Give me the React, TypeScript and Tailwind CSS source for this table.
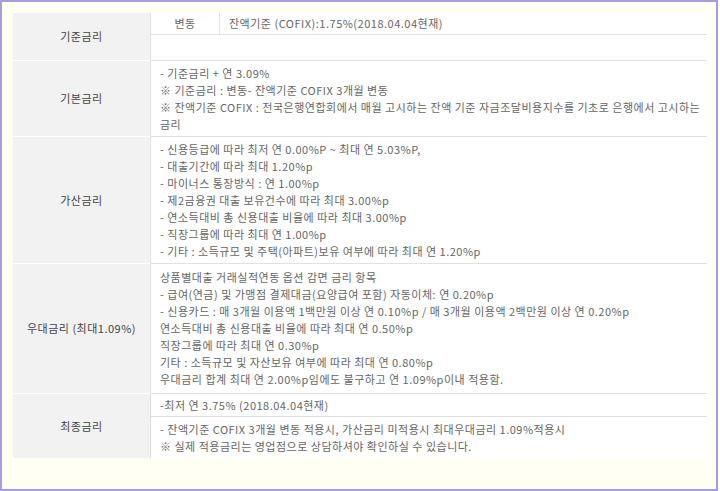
import React from 'react';

const font = { fontFamily: '"Noto Sans CJK KR", "Noto Sans", sans-serif' };

const Lines: React.FC<{ lines: string[]; className?: string }> = ({ lines, className = 'pt-1 pb-[3px]' }) => (
  <div className={`pl-[9px] ${className}`}>
    {lines.map((l, i) => (
      <div key={i} className="h-[17px] leading-[17px] whitespace-nowrap">
        {l}
      </div>
    ))}
  </div>
);

const Head: React.FC<{ label: string; last?: boolean }> = ({ label, last }) => (
  <div
    className={`flex items-center justify-center bg-[#f2f2f2] text-[#444] ${
      last ? '' : 'border-b border-white'
    }`}
  >
    {label}
  </div>
);

const Body: React.FC<{ children: React.ReactNode; last?: boolean }> = ({ children, last }) => (
  <div className={`bg-white border-l border-[#dcdcdc] ${last ? '' : 'border-b border-[#e2e2e2]'}`}>
    {children}
  </div>
);

const App: React.FC = () => {
  return (
    <div
      className="w-[718px] h-[491px] border-2 border-[#a59de0] bg-[#fffff3] pl-[11px] pt-[11px]"
      style={font}
    >
      <div className="w-[694px] grid grid-cols-[137px_1fr] text-[11px] tracking-[0.5px] text-[#666]">
        {/* 기준금리 */}
        <Head label="기준금리" />
        <Body>
          <div className="flex h-[22px] items-center border-b border-[#e2e2e2]">
            <div className="w-[69px] h-full flex items-center justify-center border-r border-[#e2e2e2]">
              변동
            </div>
            <div className="pl-[9px] whitespace-nowrap">잔액기준 (COFIX):1.75%(2018.04.04현재)</div>
          </div>
          <div className="h-[25px]" />
        </Body>

        {/* 기본금리 */}
        <Head label="기본금리" />
        <Body>
          <Lines
            lines={[
              '- 기준금리 + 연 3.09%',
              '※ 기준금리 : 변동- 잔액기준 COFIX 3개월 변동',
              '※ 잔액기준 COFIX : 전국은행연합회에서 매월 고시하는 잔액 기준 자금조달비용지수를 기초로 은행에서 고시하는',
              '금리',
            ]}
          />
        </Body>

        {/* 가산금리 */}
        <Head label="가산금리" />
        <Body>
          <Lines
            lines={[
              '- 신용등급에 따라 최저 연 0.00%P ~ 최대 연 5.03%P,',
              '- 대출기간에 따라 최대 1.20%p',
              '- 마이너스 통장방식 : 연 1.00%p',
              '- 제2금융권 대출 보유건수에 따라 최대 3.00%p',
              '- 연소득대비 총 신용대출 비율에 따라 최대 3.00%p',
              '- 직장그룹에 따라 최대 연 1.00%p',
              '- 기타 : 소득규모 및 주택(아파트)보유 여부에 따라 최대 연 1.20%p',
            ]}
          />
        </Body>

        {/* 우대금리 */}
        <Head label="우대금리 (최대1.09%)" />
        <Body>
          <Lines
            className="pt-[5px] pb-[5px]"
            lines={[
              '상품별대출 거래실적연동 옵션 감면 금리 항목',
              '- 급여(연금) 및 가맹점 결제대금(요양급여 포함) 자동이체: 연 0.20%p',
              '- 신용카드 : 매 3개월 이용액 1백만원 이상 연 0.10%p / 매 3개월 이용액 2백만원 이상 연 0.20%p',
              '연소득대비 총 신용대출 비율에 따라 최대 연 0.50%p',
              '직장그룹에 따라 최대 연 0.30%p',
              '기타 : 소득규모 및 자산보유 여부에 따라 최대 연 0.80%p',
              '우대금리 합계 최대 연 2.00%p임에도 불구하고 연 1.09%p이내 적용함.',
            ]}
          />
        </Body>

        {/* 최종금리 */}
        <Head label="최종금리" last />
        <Body last>
          <div className="h-[23px] flex items-center pl-[9px] border-b border-[#e2e2e2] whitespace-nowrap">
            -최저 연 3.75% (2018.04.04현재)
          </div>
          <Lines
            lines={[
              '- 잔액기준 COFIX 3개월 변동 적용시, 가산금리 미적용시 최대우대금리 1.09%적용시',
              '※ 실제 적용금리는 영업점으로 상담하셔야 확인하실 수 있습니다.',
            ]}
          />
        </Body>
      </div>
    </div>
  );
};

export default App;
